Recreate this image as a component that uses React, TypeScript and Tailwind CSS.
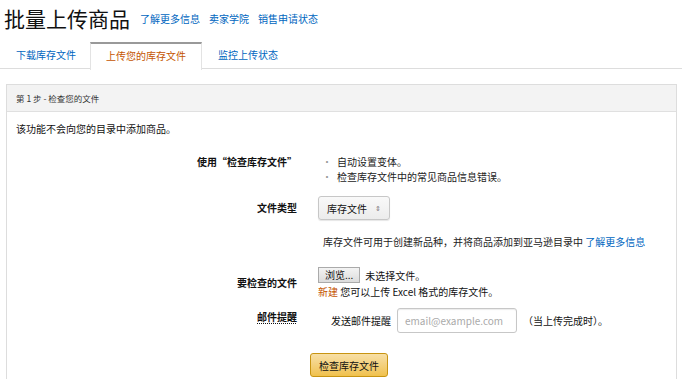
const font = { fontFamily: '"Noto Sans CJK SC", "Noto Sans", sans-serif' };

const App = () => {
  return (
    <div className="w-[682px] h-[379px] overflow-hidden bg-white text-[#111] relative" style={font}>
      {/* Title */}
      <div className="flex items-end gap-[10px] pl-[4px] pt-[1px] h-[32px]">
        <h1 className="text-[21px] leading-[28px] text-[#111]">批量上传商品</h1>
        <div className="flex gap-[9px] text-[10px] leading-[20px] text-[#0066c0] pb-[3px]">
          <span>了解更多信息</span>
          <span>卖家学院</span>
          <span>销售申请状态</span>
        </div>
      </div>

      {/* Tabs */}
      <div className="mt-[10px] flex border-b border-[#dddddd] h-[27px] px-[2px]">
        <div className="px-[14px] text-[10px] leading-[26px] text-[#0066c0]">下载库存文件</div>
        <div className="px-[15px] text-[10px] leading-[24px] text-[#c45500] bg-white border-t-2 border-[#999] border-x border-x-[#e3e3e3] -mb-px h-[28px]">
          上传您的库存文件
        </div>
        <div className="px-[16px] text-[10px] leading-[26px] text-[#0066c0]">监控上传状态</div>
      </div>

      {/* Panel */}
      <div className="mt-[15px] ml-[6px] mr-[5px] border border-[#dddddd] h-[320px]">
        <div className="bg-[#f3f3f3] border-b border-[#e0e0e0] h-[27px] px-[9px] text-[8.5px] leading-[27px] text-[#333]">
          第 1 步 - 检查您的文件
        </div>
        <div className="px-[9px] pt-[9px] text-[10px] leading-[16px]">该功能不会向您的目录中添加商品。</div>

        <div className="grid grid-cols-[290px_1fr] gap-x-[21px] mt-[17px] text-[10px]">
          {/* Row 1 */}
          <div className="text-right font-bold leading-[15px]">使用“检查库存文件”</div>
          <ul className="pl-[4px] leading-[15px] text-[#222]">
            <li className="flex gap-[5px]"><span className="text-[#999]">•</span>自动设置变体。</li>
            <li className="flex gap-[5px]"><span className="text-[#999]">•</span>检查库存文件中的常见商品信息错误。</li>
          </ul>

          {/* Row 2 */}
          <div className="text-right font-bold leading-[24px] mt-[12px]">文件类型</div>
          <div className="mt-[12px]">
            <div className="inline-flex items-center gap-[8px] h-[24px] px-[8px] border border-[#c7c7c7] rounded-[3px] bg-gradient-to-b from-[#f9f9f9] to-[#ececec] shadow-[0_1px_1px_rgba(0,0,0,0.1)]">
              <span>库存文件</span>
              <span className="text-[7px] text-[#777] leading-none">⇕</span>
            </div>
          </div>

          {/* Row 3 */}
          <div />
          <div className="mt-[14px] pl-[5px] leading-[16px] text-[#222]">
            库存文件可用于创建新品种，并将商品添加到亚马逊目录中 <span className="text-[#0066c0]">了解更多信息</span>
          </div>

          {/* Row 4 */}
          <div className="text-right font-bold leading-[16px] mt-[25px]">要检查的文件</div>
          <div className="mt-[17px]">
            <div className="flex items-center gap-[5px]">
              <span className="inline-block h-[16px] px-[6px] border border-[#aaa] bg-gradient-to-b from-[#f3f3f3] to-[#dcdcdc] leading-[14px]">浏览...</span>
              <span>未选择文件。</span>
            </div>
            <div className="leading-[16px] mt-[1px]">
              <span className="text-[#c45500]">新建</span> 您可以上传 Excel 格式的库存文件。
            </div>
          </div>

          {/* Row 5 */}
          <div className="text-right font-bold leading-[16px] mt-[9px]">
            <span className="underline decoration-dotted underline-offset-2">邮件提醒</span>
          </div>
          <div className="mt-[8px] flex items-center gap-[6px] pl-[13px]">
            <span>发送邮件提醒</span>
            <div className="w-[120px] h-[25px] border border-[#c7c7c7] rounded-[3px] px-[7px] text-[#aaa] leading-[23px] shadow-[inset_0_1px_1px_rgba(0,0,0,0.08)]">
              email@example.com
            </div>
            <span>（当上传完成时）。</span>
          </div>

          {/* Row 6 */}
          <div />
          <div className="mt-[20px] -ml-[8px]">
            <div className="inline-flex items-center justify-center w-[78px] h-[24px] border border-[#c89411] rounded-[3px] bg-gradient-to-b from-[#f7dfa5] to-[#f0c14b] text-[10px] text-[#111]">
              检查库存文件
            </div>
          </div>
        </div>
      </div>
    </div>
  );
};

export default App;
